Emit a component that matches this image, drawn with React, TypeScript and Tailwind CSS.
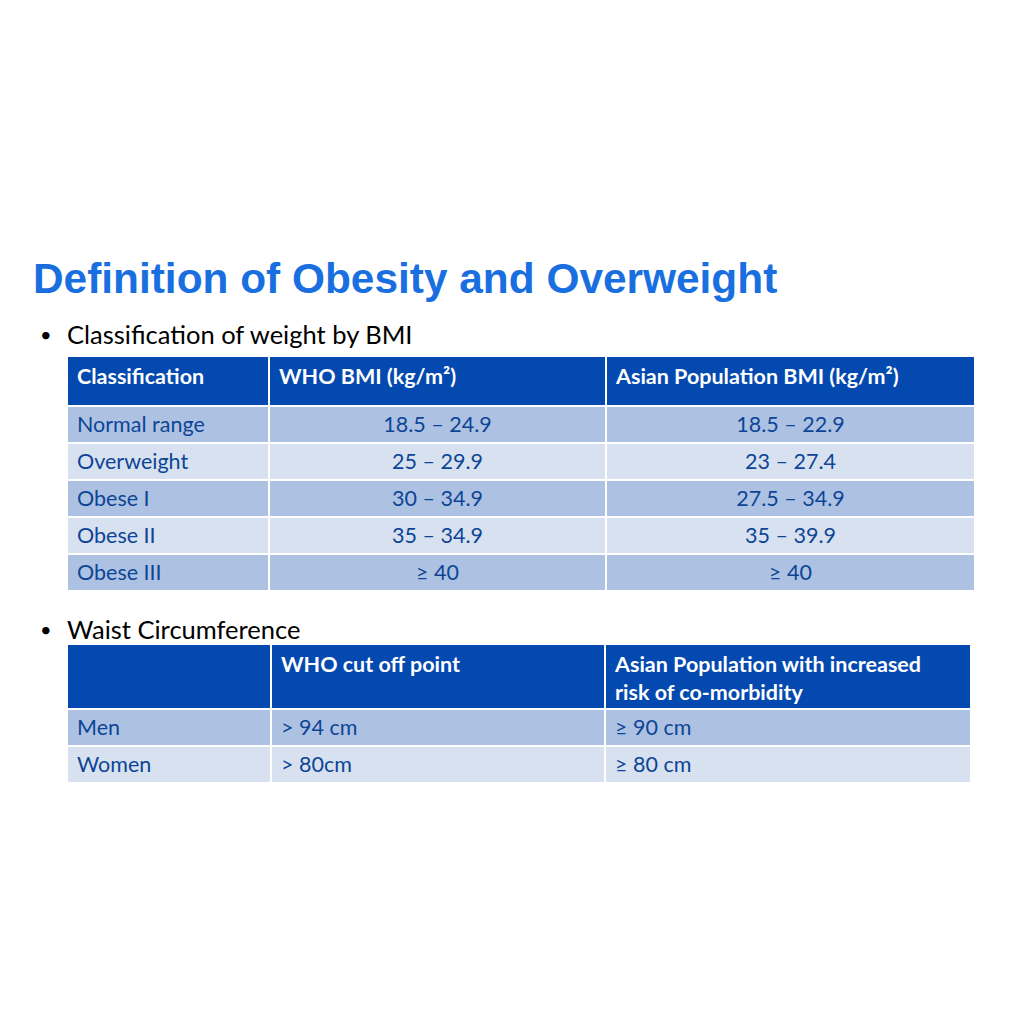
import React from "react";

const body = { fontFamily: "Lato, 'Open Sans', sans-serif" };

const rows1 = [
  ["Normal range", "18.5 – 24.9", "18.5 – 22.9"],
  ["Overweight", "25 – 29.9", "23 – 27.4"],
  ["Obese I", "30 – 34.9", "27.5 – 34.9"],
  ["Obese II", "35 – 34.9", "35 – 39.9"],
  ["Obese III", "≥ 40", "≥ 40"],
];

const rows2 = [
  ["Men", "> 94 cm", "≥ 90 cm"],
  ["Women", "> 80cm", "≥ 80 cm"],
];

export default function App() {
  return (
    <div className="w-[1024px] h-[1024px] bg-white overflow-hidden" style={body}>
      <div className="pt-[255px]">
        <h1
          className="ml-[33px] text-[42.4px] leading-[48px] font-bold text-[#1a6fe0]"
          style={{ fontFamily: "'Liberation Sans', Arial, sans-serif" }}
        >
          Definition of Obesity and Overweight
        </h1>
        <div className="flex items-center mt-[17px] h-[28px] text-[25.5px] text-black">
          <span className="w-[22px] ml-[40px] text-[20px]">•</span>
          <span className="ml-[5px]">Classification of weight by BMI</span>
        </div>
        <div className="ml-[68px] mt-[9px] w-[906px] grid grid-cols-[200px_335px_367px] gap-[2px] text-[21.5px]">
          <div className="bg-[#0449b0] h-[48px] pl-[9px] pt-[5px] leading-[28px] font-bold text-white">Classification</div>
          <div className="bg-[#0449b0] h-[48px] pl-[9px] pt-[5px] leading-[28px] font-bold text-white">WHO BMI (kg/m²)</div>
          <div className="bg-[#0449b0] h-[48px] pl-[9px] pt-[5px] leading-[28px] font-bold text-white">Asian Population BMI (kg/m²)</div>
          {rows1.map((r, i) => {
            const bg = i % 2 === 0 ? "bg-[#adc2e2]" : "bg-[#d8e1f0]";
            return (
              <React.Fragment key={i}>
                <div className={`${bg} h-[35px] pl-[9px] flex items-center text-[#0d4596]`}>{r[0]}</div>
                <div className={`${bg} h-[35px] flex items-center justify-center text-[#0d4596]`}>{r[1]}</div>
                <div className={`${bg} h-[35px] flex items-center justify-center text-[#0d4596]`}>{r[2]}</div>
              </React.Fragment>
            );
          })}
        </div>
        <div className="flex items-center mt-[25px] h-[28px] text-[25.5px] text-black">
          <span className="w-[22px] ml-[40px] text-[20px]">•</span>
          <span className="ml-[5px]">Waist Circumference</span>
        </div>
        <div className="ml-[68px] mt-[2px] w-[902px] grid grid-cols-[202px_332px_364px] gap-[2px] text-[21.5px]">
          <div className="bg-[#0449b0] h-[63px]"></div>
          <div className="bg-[#0449b0] h-[63px] pl-[9px] pt-[5px] leading-[28px] font-bold text-white">WHO cut off point</div>
          <div className="bg-[#0449b0] h-[63px] pl-[9px] pt-[5px] leading-[28px] font-bold text-white">
            Asian Population with increased
            <br />
            risk of co-morbidity
          </div>
          {rows2.map((r, i) => {
            const bg = i % 2 === 0 ? "bg-[#adc2e2]" : "bg-[#d8e1f0]";
            return (
              <React.Fragment key={i}>
                <div className={`${bg} h-[35px] pl-[9px] flex items-center text-[#0d4596]`}>{r[0]}</div>
                <div className={`${bg} h-[35px] pl-[9px] flex items-center text-[#0d4596]`}>{r[1]}</div>
                <div className={`${bg} h-[35px] pl-[9px] flex items-center text-[#0d4596]`}>{r[2]}</div>
              </React.Fragment>
            );
          })}
        </div>
      </div>
    </div>
  );
}
